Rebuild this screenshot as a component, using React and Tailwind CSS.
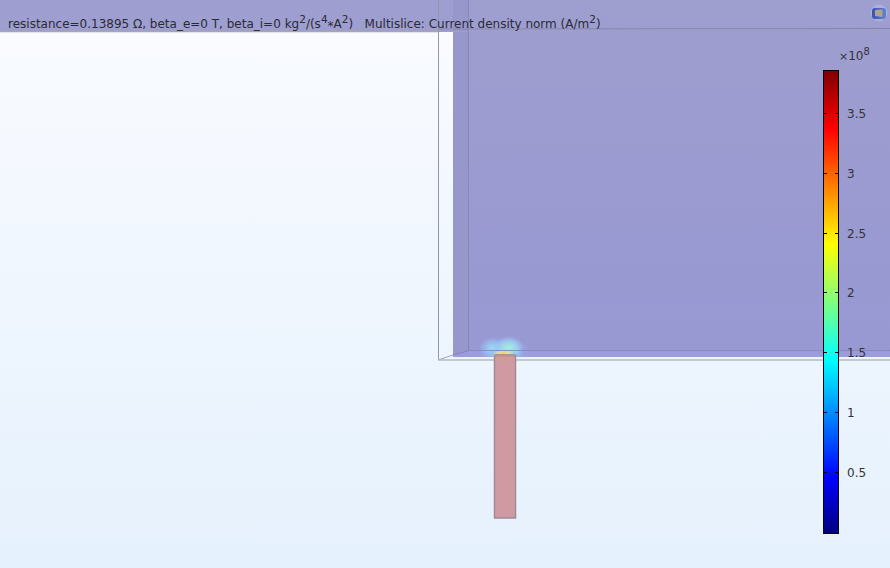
const labels = ["3.5", "3", "2.5", "2", "1.5", "1", "0.5"];

function Scene() {
  return (
    <svg className="absolute inset-0" width="890" height="568" viewBox="0 0 890 568">
      <defs>
        <radialGradient id="halo">
          <stop offset="0" stopColor="#9cc4ff" stopOpacity="0.95" />
          <stop offset="0.6" stopColor="#98b4f0" stopOpacity="0.6" />
          <stop offset="1" stopColor="#9c9cdc" stopOpacity="0" />
        </radialGradient>
        <radialGradient id="cyanLobe">
          <stop offset="0" stopColor="#9cdcf4" stopOpacity="0.95" />
          <stop offset="0.55" stopColor="#98c8f4" stopOpacity="0.6" />
          <stop offset="1" stopColor="#9cc0ff" stopOpacity="0" />
        </radialGradient>
        <radialGradient id="greenLobe">
          <stop offset="0" stopColor="#a8ecd8" stopOpacity="1" />
          <stop offset="0.5" stopColor="#9cdcf0" stopOpacity="0.8" />
          <stop offset="1" stopColor="#9cd0ff" stopOpacity="0" />
        </radialGradient>
        <radialGradient id="hotCore">
          <stop offset="0" stopColor="#ffb860" stopOpacity="1" />
          <stop offset="0.55" stopColor="#f4e080" stopOpacity="0.85" />
          <stop offset="1" stopColor="#c8f0a0" stopOpacity="0" />
        </radialGradient>
        <clipPath id="glowClip">
          <rect x="440" y="300" width="140" height="57" />
        </clipPath>
        <linearGradient id="wall" x1="0" y1="0" x2="0" y2="1">
          <stop offset="0" stopColor="#9e9ecf" />
          <stop offset="1" stopColor="#9898d3" />
        </linearGradient>
        <linearGradient id="iconBody" x1="0" y1="0" x2="1" y2="0">
          <stop offset="0" stopColor="#3a4fb0" />
          <stop offset="1" stopColor="#5c86d8" />
        </linearGradient>
        <filter id="iconBlur">
          <feGaussianBlur stdDeviation="0.6" />
        </filter>
      </defs>
      {/* block */}
      <rect x="468" y="0" width="422" height="351" fill="url(#wall)" />
      <rect x="453" y="0" width="15" height="356" fill="#9797cb" />
      <path d="M453 355 L468 351 L890 351 L890 357 L453 357 Z" fill="#9c9cdc" />
      {/* glow */}
      <g clipPath="url(#glowClip)">
        <ellipse cx="504" cy="353" rx="28" ry="18" fill="url(#halo)" />
        <ellipse cx="492" cy="348" rx="13" ry="11" fill="url(#cyanLobe)" />
        <ellipse cx="509" cy="348" rx="15" ry="12" fill="url(#greenLobe)" />
        <ellipse cx="503" cy="355" rx="11" ry="6" fill="url(#hotCore)" />
      </g>
      {/* edges */}
      <line x1="0" y1="31.5" x2="438" y2="31.5" stroke="#a8a8a8" strokeWidth="1.5" />
      <line x1="438" y1="31.5" x2="890" y2="31.5" stroke="#a0a0bc" strokeWidth="1" />
      <line x1="438" y1="29" x2="890" y2="28.5" stroke="#8585b5" strokeWidth="1" />
      <line x1="468.5" y1="0" x2="468.5" y2="351" stroke="#8686b8" strokeWidth="1" />
      <line x1="468" y1="350.5" x2="890" y2="350.5" stroke="#8585b9" strokeOpacity="0.85" strokeWidth="1" />
      <line x1="453" y1="355" x2="468" y2="351" stroke="#8585b9" strokeWidth="1" />
      <line x1="438.5" y1="0" x2="438.5" y2="360" stroke="#9494aa" strokeWidth="1" />
      <line x1="438" y1="360" x2="453" y2="355" stroke="#a4a4b4" strokeWidth="1" />
      <line x1="438" y1="360" x2="890" y2="360" stroke="#b4b8c4" strokeWidth="1.5" />
      {/* strip */}
      <rect x="494.5" y="355.5" width="21" height="162.5" fill="#d09aa2" stroke="#a08a94" strokeWidth="1.5" />
      <rect x="495" y="354" width="20" height="2" fill="#b8908e" />
      {/* view icon */}
      <circle cx="879" cy="13" r="8.5" fill="#aeaeda" />
      <g filter="url(#iconBlur)">
        <rect x="872" y="8" width="14" height="11" rx="3" fill="url(#iconBody)" />
        <path d="M875 10 L882.5 9.5 L882.5 17 L875 16 Z" fill="#b0a48c" />
      </g>
    </svg>
  );
}

function ColorBar() {
  return (
    <div className="absolute left-[823px] top-[49px] flex flex-col text-[12px] leading-[14px] text-[#33333a]">
      <div className="ml-[16px] h-[21px] whitespace-pre">
        <span className="text-[11px]">×</span>10<sup className="text-[10px]">8</sup>
      </div>
      <div className="flex">
        <div className="flex h-[464px] w-[16px] flex-col gap-[58.8px] border border-black bg-[linear-gradient(to_top,#00007f_0%,#0000ff_12%,#00ffff_37.5%,#ffff00_62.5%,#ff0000_87.5%,#7f0000_100%)] pt-[42px]">
          {labels.map((t) => (
            <div key={t} className="flex justify-between">
              <span className="h-px w-[3px] bg-black" />
              <span className="h-px w-[3px] bg-black" />
            </div>
          ))}
        </div>
        <div className="ml-[8px] flex flex-col gap-[45.8px] pt-[37px]">
          {labels.map((t) => (
            <div key={t}>{t}</div>
          ))}
        </div>
      </div>
    </div>
  );
}

export default function App() {
  return (
    <div className="relative h-[568px] w-[890px] overflow-hidden bg-[#9e9ed0] font-['DejaVu_Sans',sans-serif]">
      <div className="absolute inset-x-0 bottom-0 top-[32px] bg-[linear-gradient(to_bottom,#f9fbff_0%,#e5f1fd_100%)]" />
      <Scene />
      <div className="relative whitespace-pre pl-[8px] pt-[15px] text-[12px] leading-[18px] text-[#2b2b33]">
        resistance=0.13895 Ω, beta_e=0 T, beta_i=0 kg<sup className="text-[10.5px]">2</sup>/(s<sup className="text-[10.5px]">4</sup><span className="relative top-[2px]">*</span>A<sup className="text-[10.5px]">2</sup>){"   "}Multislice: Current density norm (A/m<sup className="text-[10.5px]">2</sup>)
      </div>
      <ColorBar />
    </div>
  );
}
